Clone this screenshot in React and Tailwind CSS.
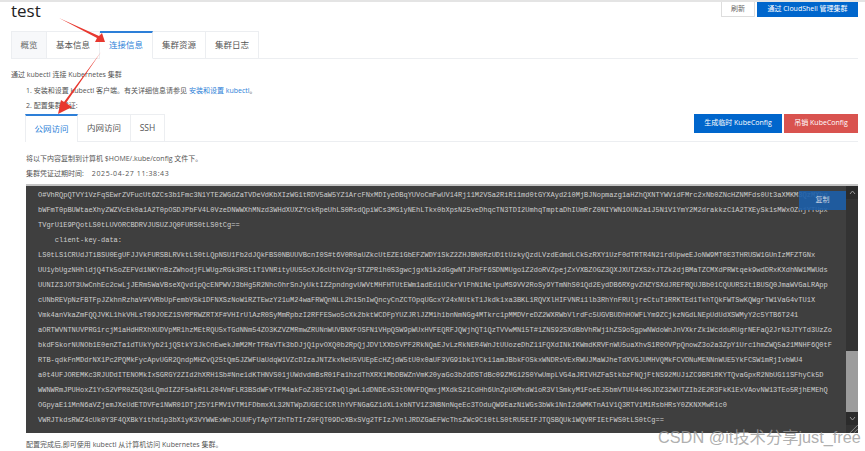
const sans = "[font-family:'Open_Sans','Noto_Sans_CJK_SC',sans-serif]";

const mainTabs = ["概览", "基本信息", "连接信息", "集群资源", "集群日志"];
const subTabs = [
  { label: "公网访问", width: "w-[53px]" },
  { label: "内网访问", width: "w-[53px]" },
  { label: "SSH", width: "w-[34px]" },
];

const codeLines = [
  "O#VhRQpQTVY1VzFqSEwrZVFucUt6ZCs3b1Fmc3N1YTE2WGdZaTVDeVdKbXIzWG1tRDV5aW5YZ1ArcFNxMDIyeDBqYUVoCmFwUV14Rj11M2VSa2RiR11md0tGYXAyd210MjBJNopmazg1aHZhQXNTYWVidFMrc2xNb0ZNcHZNMFds0Ut3aXMKM3QzMXhg",
  "bWFmT0pBUWtaeXhyZWZVcEk0a1A2T0pOSDJPbFV4L0VzeDNWWXhMNzd3WHdXUXZYckRpeUhLS0RsdQpiWCs3MG1yNEhLTkx0bXpsN25veDhqcTN3TDI2UmhqTmptaDhIUmRrZ0NIYWN1OUN2a1J5N1V1YmY2M2drakkzC1A2TXEySk1sMWxOZnjYTUpx",
  "TVgrU1E9PQotLS0tLUVORCBDRVJUSUZJQ0FURS0tLS0tCg==",
  "    client-key-data:",
  "LS0tLS1CRUdJTiBSU0EgUFJJVkFURSBLRVktLS0tLQpNSU1Fb2dJQkFBS0NBUUVBcnI0S#t6V0R0aUZkcUtEZE1GbEFZWDY1SkZ2ZHJBN0RzUD1tUzkyQzdLVzdEdmdLCk5zRXY1UzF0dTRTR4N21rdUpweEJoNW9MT0E3THRUSW1GUnIzMFZTGNx",
  "UU1ybUgzNHhldjQ4Tk5oZEFVd1NKYnBzZWhodjFLWUgzRGk3RSt1T1VNRityUU55cXJ6cUthV2grSTZPR1h0S3gwcjgxN1k2dGgwNTJFbFF6SDNMUgo1Z2doRVZpejZxVXBZOGZ3QXJXUTZXS2xJTZk2djBMaTZCMXdPRWtqek9wdDRxKXdhNW1MWUds",
  "UUNIZ3JOT3UwCnhEc2cwLjJERm5WaVBseXQvd1pQcENPWVJ3bHg5R2NhcOhrSnJyUktIZ2pndngvUWVtMHFHTUtEWm1adEdiUCkrVlFhN1NelpuMS9VV2RoSy9YTmNhS01Qd2EydDB6RXgvZHZYSXdJREFRQUJBb01CQUURS2t1BUSQ0JmaWVGaLRApp",
  "cUNbREVpNzFBTFpJZkhnRzhaV#VVRbUpFembVSk1DFNXSzNoW1RZTEwzY21uM24waFRWQnNLL2h1SnIwQncyCnZCTOpqUGcxY24xNUtkT1Jkdk1xa3BKL1RQVXlHIFVNRi1lb3RhYnFRUljreCtuT1RRKTEd1TkhTQkFWTSwKQWgrTW1VaG4vTU1X",
  "Vmk4anVkaZmFQQJVKL1hkVHLsT09JOEZ1SVRPRWZRTXF#VHIrUlAzR0SyMmRpbzI2RFFESwo5cXk2bktWCDFpYUZJRlJZM1h1bnNmNGg4MTkrc1pMMDVreDZ2WXRWbVlrdFc5UGVBUDhHOWFLYm9ZCjkzNGdLNEpUdUdXSWMyY2c5YTB6T241",
  "aORTWVNTNUVPRG1rcjM1aHdHRXhXUDVpMR1hzMEtRQU5xTGdNNm54ZO3KZVZMRmwZRUNnWUVBNXFOSFN1VHpQSW9pWUxHVFEQRFJQWjhQT1QzTVVwMN15T#1ZNS92SXdBbVhRWj1hZS9oSgpwNWdoWnJnVXkrZk1WcdduRUgrNEFaQ2JrN3JTYTd3UzZo",
  "bkdFSkorNUNOb1E0enZTa1dTUkYyb21jQStkY3JkCnEwekJmM2MrTFRaVTk3bDJjQ1pvOXQ0b2RpQjJDVlXXb5VPF2RkNQaEJvLzRkNER4WnJtUUozeDhZ11FQXdINkIKWmdKRVFnWU5uaXhvS1R0OVPpQnowZ3o2a3ZpY1Urc1hmZWQ5a21MNHF6Q0tF",
  "RTB-qdkFnMDdrNX1Pc2PQMkFycApvUGR2QndpMHZvQ25tQm5JZWFUaUdqW1VZcDIzaJNTZkxNeU5VUEpEcHZjdW5tU0x0aUF3VG91bk1YCk11amJBbkFOSkxWNDRsVExRWUJMaWJheTdXVGJUMHVQMkFCVDNuMENNnWUE5YkFCSW1mRjIvbWU4",
  "a0t4UFJOREMKc3RJUDdITENOMkIxSGRGY2ZId2hXRH1Sb#Nne1dKTHNVS01jUWdvdmBsR01Fa1hzdThXRX1MbDBWZnVmK20yaGo3b2dDSTdBc09ZMG12S0YwUmpLVG4aJRIVHZFaStkbzFNQjFtNS92MUJiZC9BR1RKYTQvaGpxR2NbUG11SFhyCk5D",
  "WWNWRmJPUHoxZ1YxS2VPR0Z5Q3dLQmdIZ2F5akR1L204VmFLR3BSdWFvTFM4akFoZJ85Y2IwQlgwL1dDNDExS3tONVFDQmxjMXdkS21CdHh6UnZpUGMxdW1oR3VlSmkyM1FoeEJ5bmVTUU440GJDZ32WUTZIb2E2R3FkK1ExVAovNW13TEo5RjhEMEhQ",
  "OGpyaE11MnN6aVZjemJXeUdETDVFe1NWR01DTjZ5Y1FMV1VTM1FDbmxXL32NTWpZUGEC1CRlhYVFNGaGZ1dXL1xbNTV1Z3NBNnNqeEc3TOduQW9EazNiWGs3bWk1NnI2dWMKTnA1V1Q3RTV1M1RsbHRsY0ZKNXMwR1c0",
  "VWRJTkdsRWZ4cUk0Y3F4QXBkYithd1p3bX1yK3VYWWExWnJCUUFyTApYT2hTbTIrZ0FQT09DcXBxSVg2TFIzJVnlJRDZGaEFWcThsZWc9C10tLS0tRU5EIFJTQSBQUk1WQVRFIEtFWS0tLS0tCg==",
];

export default function App() {
  return (
    <div className={`relative w-[865px] h-[451px] overflow-hidden bg-white text-[#555] ${sans}`}>
      <div className="h-[2px] bg-[#e4e4e4]" />

      <div className="flex justify-between pl-[11px] pr-[7px]">
        <h1 className="text-[17px] leading-[17px] text-[#222]">test</h1>
        <div className="flex gap-[2px] text-[7px]">
          <button className="w-[34px] h-[15px] bg-white border border-[#ddd] border-t-0 rounded-b-[1px] text-[#666]">刷新</button>
          <button className="w-[101px] h-[15px] bg-[#0066cc] text-white">通过 CloudShell 管理集群</button>
        </div>
      </div>

      <div className="flex mt-[12px] mr-[7px] ml-[11px] border-b border-[#eceef1] h-[28px]">
        {mainTabs.map((t) => {
          const active = t === "连接信息";
          const first = t === "概览";
          return (
            <div
              key={t}
              className={`flex items-center justify-center text-[8.5px] border-r border-[#eceef1] ${
                first ? "w-[36px] border-l bg-[#f7f8fa] border-t text-[#666]" : "w-[53px]"
              } ${
                active
                  ? "h-[28px] bg-white border-t-2 border-t-[#2d7fd8] border-b border-b-white text-[#2d7fd8]"
                  : "border-t text-[#555]"
              }`}
            >
              {t}
            </div>
          );
        })}
      </div>

      <p className="mt-[10px] ml-[11px] text-[7px] leading-[11px] text-[#555]">通过 kubectl 连接 Kubernetes 集群</p>
      <ol className="mt-[5px] ml-[26px] text-[7px] leading-[11px] text-[#555]">
        <li>
          1. 安装和设置 kubectl 客户端。有关详细信息请参见{" "}
          <span className="text-[#2d7fd8]">安装和设置 kubectl</span>。
        </li>
        <li className="mt-[4px]">2. 配置集群凭证:</li>
      </ol>

      <div className="flex items-start justify-between mt-[3px] ml-[25px] mr-[7px] border-b border-[#eceef1] h-[28px]">
        <div className="flex">
          {subTabs.map((t, i) => (
            <div
              key={t.label}
              className={`flex items-center justify-center h-[28px] text-[8.5px] border-r border-[#eceef1] ${t.width} ${
                i === 0
                  ? "border-l border-t-2 border-t-[#2d7fd8] bg-white text-[#2d7fd8]"
                  : "border-t text-[#555]"
              }`}
            >
              {t.label}
            </div>
          ))}
        </div>
        <div className="flex gap-[2px] text-[7px] text-white">
          <button className="w-[88px] h-[19px] bg-[#0066cc]">生成临时 KubeConfig</button>
          <button className="w-[74px] h-[19px] bg-[#d9534f]">吊销 KubeConfig</button>
        </div>
      </div>

      <p className="mt-[11px] ml-[26px] text-[7px] leading-[11px]">将以下内容复制到计算机 $HOME/.kube/config 文件下。</p>
      <p className="mt-[4px] ml-[26px] text-[7px] leading-[11px]">
        集群凭证过期时间:<span className="ml-[8px] tracking-[0.6px]">2025-04-27 11:38:43</span>
      </p>

      <div className="relative mt-[5px] ml-[26px] mr-[7px] h-[249px] bg-[#3f3f3f] border-t-2 border-[#c4c4c4] overflow-hidden">
        <div className="pt-[2px] pl-[12px] pr-[14px] overflow-hidden">
          {codeLines.map((line, i) => (
            <div
              key={i}
              className="h-[15px] leading-[15px] whitespace-pre text-[7px] text-[#cfcfcf] [font-family:'Liberation_Mono',monospace]"
            >
              {line}
            </div>
          ))}
        </div>

        <button className="absolute top-[5px] right-[12px] w-[47px] h-[19px] bg-[#1c5ea8]/90 text-[7px] text-[#c9d4e2]">复制</button>

        <div className="absolute top-0 right-0 bottom-0 w-[12px] flex flex-col bg-[#333]">
          <div className="flex items-center justify-center h-[13px] bg-[#2b2b2b]">
            <svg width="7" height="5" viewBox="0 0 7 5">
              <path d="M1 4l2.5-3L6 4" fill="none" stroke="#999" strokeWidth="1" />
            </svg>
          </div>
          <div className="mt-[152px] h-[63px] bg-[#9c9c9c]" />
          <div className="flex-1" />
          <div className="flex items-center justify-center h-[13px] bg-[#2b2b2b]">
            <svg width="7" height="5" viewBox="0 0 7 5">
              <path d="M1 1l2.5 3L6 1" fill="none" stroke="#999" strokeWidth="1" />
            </svg>
          </div>
          <svg className="h-[8px] w-[12px]" viewBox="0 0 12 8">
            <path d="M4 8l8-8M8 8l4-4" stroke="#8a8a8a" strokeWidth="1" />
          </svg>
        </div>
      </div>

      <p className="mt-[6px] ml-[26px] text-[7px] leading-[11px]">配置完成后,即可使用 kubectl 从计算机访问 Kubernetes 集群。</p>

      <svg className="absolute inset-0 pointer-events-none" width="865" height="451" viewBox="0 0 865 451">
        <polygon points="59,18 99,36 102,33 105,42 95,42 97,38" fill="#e8382f" />
        <polygon points="101,52 66,103 72,107 58,114 61,100 64,102" fill="#e8382f" />
      </svg>

      <div className="absolute left-[658px] top-[427px] text-[16.3px] leading-[20px] whitespace-nowrap text-[#9a9a9a]/80 [font-family:'Liberation_Sans','Noto_Sans_CJK_SC',sans-serif]">
        CSDN @it技术分享just_free
      </div>
    </div>
  );
}
